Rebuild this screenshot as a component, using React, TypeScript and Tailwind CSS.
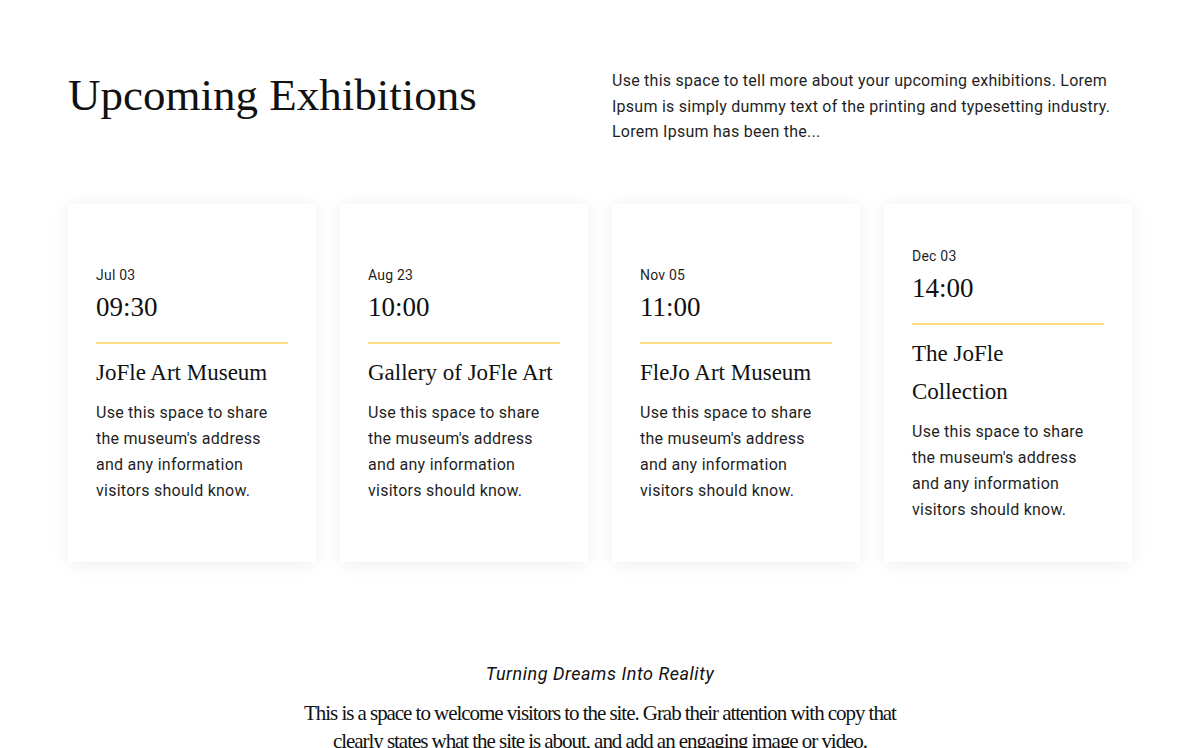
import React from 'react';

type Exhibition = {
  date: string;
  time: string;
  venue: string;
};

const exhibitions: Exhibition[] = [
  { date: 'Jul 03', time: '09:30', venue: 'JoFle Art Museum' },
  { date: 'Aug 23', time: '10:00', venue: 'Gallery of JoFle Art' },
  { date: 'Nov 05', time: '11:00', venue: 'FleJo Art Museum' },
  { date: 'Dec 03', time: '14:00', venue: 'The JoFle\nCollection' },
];

const serif = "font-['Liberation_Serif',serif]";
const sans = "font-['Roboto',sans-serif] tracking-[0.016em]";

const ExhibitionCard: React.FC<{ item: Exhibition }> = ({ item }) => (
  <div className="bg-white h-[358px] shadow-[0_2px_18px_rgba(0,0,0,0.07)] flex flex-col justify-center px-[28px] pt-[4px]">
    <div className={`${sans} text-[14px] leading-[20px] text-[#1f1f1f]`}>{item.date}</div>
    <div className={`${serif} text-[27px] leading-[36px] text-[#111] mt-[4px]`}>{item.time}</div>
    <div className="h-[2px] bg-[#fbdc7e] mt-[17px]" />
    <div className={`${serif} whitespace-pre-line text-[23px] leading-[38px] text-[#111] mt-[10px]`}>
      {item.venue}
    </div>
    <p className={`${sans} text-[16px] leading-[26px] text-[#1f1f1f] mt-[8px]`}>
      Use this space to share the museum's address and any information visitors should know.
    </p>
  </div>
);

export default function App() {
  return (
    <div className="bg-white w-full min-h-screen overflow-hidden">
      <div className="w-[1064px] mx-auto pt-[67px]">
        <div className="grid grid-cols-4 gap-[24px] items-start">
          <h1 className={`${serif} col-span-2 text-[45px] leading-[56px] text-[#111]`}>
            Upcoming Exhibitions
          </h1>
          <p className={`${sans} col-span-2 text-[16px] leading-[25.6px] text-[#1f1f1f] pt-[1px] pr-[10px]`}>
            Use this space to tell more about your upcoming exhibitions. Lorem Ipsum is simply dummy
            text of the printing and typesetting industry. Lorem Ipsum has been the...
          </p>
        </div>

        <div className="grid grid-cols-4 gap-[24px] mt-[59px]">
          {exhibitions.map((item) => (
            <ExhibitionCard key={item.date} item={item} />
          ))}
        </div>

        <div className="mt-[99px] flex flex-col items-center text-center">
          <div className="font-['Roboto',sans-serif] italic text-[18px] leading-[26px] tracking-[0.03em] text-[#111]">
            Turning Dreams Into Reality
          </div>
          <p className={`${serif} text-[21px] leading-[28px] tracking-[-0.05em] text-[#111] mt-[12px] w-[620px]`}>
            This is a space to welcome visitors to the site. Grab their attention with copy that
            clearly states what the site is about, and add an engaging image or video.
          </p>
        </div>
      </div>
    </div>
  );
}
